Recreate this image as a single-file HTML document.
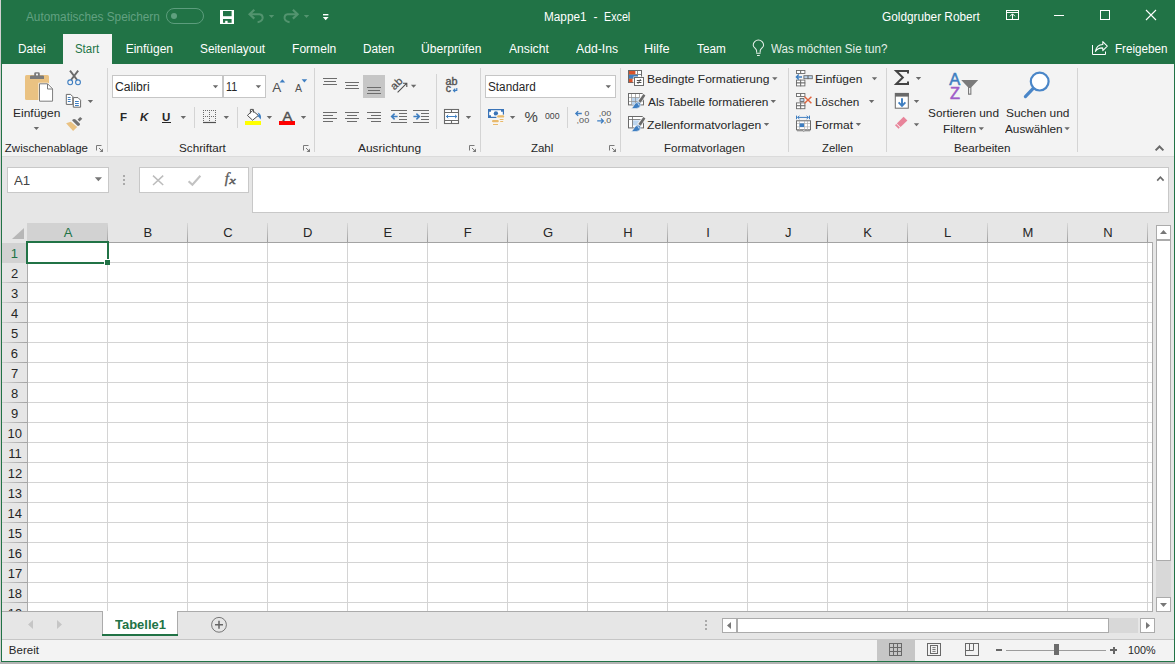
<!DOCTYPE html>
<html lang="de"><head><meta charset="utf-8"><title>Mappe1 - Excel</title>
<style>
html,body{margin:0;padding:0}
body{width:1175px;height:664px;position:relative;overflow:hidden;background:#e6e6e6;font-family:"Liberation Sans",sans-serif;}
body>div,body>span,body>svg{position:absolute;display:block}
.t{white-space:pre;line-height:20px;height:20px;transform-origin:0 0}
svg{overflow:visible}
</style></head><body>
<div style="left:0px;top:0px;width:1px;height:664px;background:#d2d0d1;"></div>
<div style="left:1px;top:0px;width:1174px;height:64px;background:#217346;"></div>
<div style="left:2px;top:64px;width:1172px;height:92px;background:#f3f3f3;"></div>
<div style="left:2px;top:156px;width:1172px;height:1px;background:#dbdbdb;"></div>
<div style="left:1px;top:0px;width:1px;height:662px;background:#217346;"></div>
<div style="left:1174px;top:0px;width:1px;height:662px;background:#217346;"></div>
<div style="left:1px;top:661px;width:1174px;height:1px;background:#217346;"></div>
<div style="left:0px;top:662px;width:1175px;height:2px;background:#b3b3b3;"></div>
<span class="t" style="left:25.50px;top:6.80px;font-size:12px;color:#62a181;transform:scaleX(0.9836);">Automatisches Speichern</span>
<div style="left:166px;top:8px;width:36px;height:14px;border:1px solid #5c9d7d;border-radius:8px"></div>
<div style="left:171px;top:13px;width:6px;height:6px;border-radius:3px;background:#5fa07f"></div>
<span class="t" style="left:543.98px;top:6.80px;font-size:12px;color:#fff;transform:scaleX(0.9815);">Mappe1</span>
<span class="t" style="left:593.50px;top:6.80px;font-size:12px;color:#fff;">-</span>
<span class="t" style="left:604.16px;top:6.80px;font-size:12px;color:#fff;transform:scaleX(0.8941);">Excel</span>
<span class="t" style="left:882.25px;top:6.60px;font-size:12px;color:#fff;transform:scaleX(0.9843);">Goldgruber Robert</span>
<div style="left:63px;top:34px;width:49px;height:30px;background:#f3f3f3;"></div>
<span class="t" style="left:17.78px;top:38.80px;font-size:12px;color:#fff;transform:scaleX(0.9843);">Datei</span>
<span class="t" style="left:74.66px;top:38.80px;font-size:12px;color:#217346;transform:scaleX(0.9519);">Start</span>
<span class="t" style="left:125.66px;top:38.80px;font-size:12px;color:#fff;">Einfügen</span>
<span class="t" style="left:199.95px;top:38.80px;font-size:12px;color:#fff;transform:scaleX(0.9851);">Seitenlayout</span>
<span class="t" style="left:291.96px;top:38.80px;font-size:12px;color:#fff;transform:scaleX(1.0068);">Formeln</span>
<span class="t" style="left:362.88px;top:38.80px;font-size:12px;color:#fff;transform:scaleX(0.9811);">Daten</span>
<span class="t" style="left:421.06px;top:38.80px;font-size:12px;color:#fff;transform:scaleX(1.0073);">Überprüfen</span>
<span class="t" style="left:508.50px;top:38.80px;font-size:12px;color:#fff;transform:scaleX(1.0115);">Ansicht</span>
<span class="t" style="left:575.50px;top:38.80px;font-size:12px;color:#fff;transform:scaleX(1.0162);">Add-Ins</span>
<span class="t" style="left:644.00px;top:38.80px;font-size:12px;color:#fff;transform:scaleX(1.0637);">Hilfe</span>
<span class="t" style="left:696.56px;top:38.80px;font-size:12px;color:#fff;transform:scaleX(0.9797);">Team</span>
<span class="t" style="left:770.54px;top:38.80px;font-size:12px;color:#e4efe8;transform:scaleX(0.9682);">Was möchten Sie tun?</span>
<span class="t" style="left:1114.79px;top:39.00px;font-size:12px;color:#fff;transform:scaleX(0.9699);">Freigeben</span>
<div style="left:107px;top:68px;width:1px;height:84px;background:#d4d4d4;"></div>
<div style="left:314px;top:68px;width:1px;height:84px;background:#d4d4d4;"></div>
<div style="left:480px;top:68px;width:1px;height:84px;background:#d4d4d4;"></div>
<div style="left:620px;top:68px;width:1px;height:84px;background:#d4d4d4;"></div>
<div style="left:788px;top:68px;width:1px;height:84px;background:#d4d4d4;"></div>
<div style="left:886px;top:68px;width:1px;height:84px;background:#d4d4d4;"></div>
<div style="left:1077px;top:68px;width:1px;height:84px;background:#d4d4d4;"></div>
<div style="left:194px;top:107px;width:1px;height:21px;background:#d4d4d4;"></div>
<div style="left:237px;top:107px;width:1px;height:21px;background:#d4d4d4;"></div>
<div style="left:567px;top:107px;width:1px;height:21px;background:#d4d4d4;"></div>
<div style="left:436px;top:74px;width:1px;height:55px;background:#d4d4d4;"></div>
<span class="t" style="left:4.82px;top:137.50px;font-size:11.5px;color:#262626;">Zwischenablage</span>
<span class="t" style="left:179.29px;top:137.50px;font-size:11.5px;color:#262626;transform:scaleX(1.0168);">Schriftart</span>
<span class="t" style="left:358.20px;top:137.50px;font-size:11.5px;color:#262626;transform:scaleX(1.0383);">Ausrichtung</span>
<span class="t" style="left:530.92px;top:137.50px;font-size:11.5px;color:#262626;">Zahl</span>
<span class="t" style="left:664.06px;top:137.50px;font-size:11.5px;color:#262626;transform:scaleX(1.0041);">Formatvorlagen</span>
<span class="t" style="left:822.13px;top:137.50px;font-size:11.5px;color:#262626;transform:scaleX(0.9884);">Zellen</span>
<span class="t" style="left:953.85px;top:137.50px;font-size:11.5px;color:#262626;transform:scaleX(1.0148);">Bearbeiten</span>
<span class="t" style="left:12.92px;top:102.50px;font-size:11.5px;color:#262626;transform:scaleX(1.0423);">Einfügen</span>
<div style="left:112px;top:75px;width:109px;height:21px;background:#fff;border:1px solid #c6c6c6;"></div>
<div style="left:223px;top:75px;width:41px;height:21px;background:#fff;border:1px solid #c6c6c6;"></div>
<span class="t" style="left:115.13px;top:76.90px;font-size:12px;color:#262626;transform:scaleX(1.0176);">Calibri</span>
<span class="t" style="left:226.42px;top:76.90px;font-size:12px;color:#262626;transform:scaleX(0.8949);">11</span>
<span class="t" style="left:120.05px;top:106.50px;font-size:11.5px;color:#262626;font-weight:bold;">F</span>
<span class="t" style="left:140.11px;top:106.50px;font-size:11.5px;color:#262626;font-weight:bold;font-style:italic;">K</span>
<span class="t" style="left:162.11px;top:106.50px;font-size:11.5px;color:#262626;font-weight:bold;">U</span>
<div style="left:162px;top:122px;width:9px;height:1px;background:#262626;"></div>
<div style="left:485px;top:75px;width:129px;height:21px;background:#fff;border:1px solid #c6c6c6;"></div>
<span class="t" style="left:488.05px;top:76.90px;font-size:12px;color:#262626;transform:scaleX(0.9794);">Standard</span>
<span class="t" style="left:524.50px;top:107.10px;font-size:15px;color:#444;">%</span>
<span class="t" style="left:544.76px;top:106.30px;font-size:9.5px;color:#444;transform:scaleX(0.9190);">000</span>
<span class="t" style="left:646.72px;top:68.60px;font-size:11.5px;color:#262626;transform:scaleX(1.0459);">Bedingte Formatierung</span>
<span class="t" style="left:647.70px;top:91.50px;font-size:11.5px;color:#262626;transform:scaleX(1.0313);">Als Tabelle formatieren</span>
<span class="t" style="left:646.90px;top:114.50px;font-size:11.5px;color:#262626;transform:scaleX(1.0567);">Zellenformatvorlagen</span>
<span class="t" style="left:814.82px;top:68.60px;font-size:11.5px;color:#262626;transform:scaleX(1.0423);">Einfügen</span>
<span class="t" style="left:814.84px;top:91.50px;font-size:11.5px;color:#262626;transform:scaleX(1.0188);">Löschen</span>
<span class="t" style="left:814.82px;top:114.50px;font-size:11.5px;color:#262626;transform:scaleX(1.0441);">Format</span>
<span class="t" style="left:928.09px;top:102.50px;font-size:11.5px;color:#262626;transform:scaleX(1.0278);">Sortieren und</span>
<span class="t" style="left:942.93px;top:118.80px;font-size:11.5px;color:#262626;transform:scaleX(1.0326);">Filtern</span>
<span class="t" style="left:1005.88px;top:102.50px;font-size:11.5px;color:#262626;transform:scaleX(1.0334);">Suchen und</span>
<span class="t" style="left:1004.50px;top:118.80px;font-size:11.5px;color:#262626;transform:scaleX(1.0241);">Auswählen</span>
<div style="left:7px;top:167px;width:100px;height:24px;background:#fff;border:1px solid #c8c8c8;"></div>
<span class="t" style="left:14.30px;top:170.50px;font-size:13px;color:#444;transform:scaleX(1.0188);">A1</span>
<div style="left:123px;top:175px;width:2px;height:2px;background:#aaaaaa;"></div>
<div style="left:123px;top:179px;width:2px;height:2px;background:#aaaaaa;"></div>
<div style="left:123px;top:183px;width:2px;height:2px;background:#aaaaaa;"></div>
<div style="left:139px;top:167px;width:108px;height:24px;background:#fff;border:1px solid #c8c8c8;"></div>
<div style="left:252px;top:167px;width:915px;height:44px;background:#fff;border:1px solid #c8c8c8;"></div>
<div style="left:27px;top:243px;width:1126px;height:369px;background:#fff;"></div>
<div style="left:27px;top:223px;width:81px;height:18px;background:#d2d2d2;"></div>
<div style="left:107px;top:223px;width:1px;height:20px;background:linear-gradient(to bottom,#d8d8d8,#9c9c9c);"></div>
<div style="left:107px;top:243px;width:1px;height:369px;background:#d4d4d4;"></div>
<div style="left:187px;top:223px;width:1px;height:20px;background:linear-gradient(to bottom,#d8d8d8,#9c9c9c);"></div>
<div style="left:187px;top:243px;width:1px;height:369px;background:#d4d4d4;"></div>
<div style="left:267px;top:223px;width:1px;height:20px;background:linear-gradient(to bottom,#d8d8d8,#9c9c9c);"></div>
<div style="left:267px;top:243px;width:1px;height:369px;background:#d4d4d4;"></div>
<div style="left:347px;top:223px;width:1px;height:20px;background:linear-gradient(to bottom,#d8d8d8,#9c9c9c);"></div>
<div style="left:347px;top:243px;width:1px;height:369px;background:#d4d4d4;"></div>
<div style="left:427px;top:223px;width:1px;height:20px;background:linear-gradient(to bottom,#d8d8d8,#9c9c9c);"></div>
<div style="left:427px;top:243px;width:1px;height:369px;background:#d4d4d4;"></div>
<div style="left:507px;top:223px;width:1px;height:20px;background:linear-gradient(to bottom,#d8d8d8,#9c9c9c);"></div>
<div style="left:507px;top:243px;width:1px;height:369px;background:#d4d4d4;"></div>
<div style="left:587px;top:223px;width:1px;height:20px;background:linear-gradient(to bottom,#d8d8d8,#9c9c9c);"></div>
<div style="left:587px;top:243px;width:1px;height:369px;background:#d4d4d4;"></div>
<div style="left:667px;top:223px;width:1px;height:20px;background:linear-gradient(to bottom,#d8d8d8,#9c9c9c);"></div>
<div style="left:667px;top:243px;width:1px;height:369px;background:#d4d4d4;"></div>
<div style="left:747px;top:223px;width:1px;height:20px;background:linear-gradient(to bottom,#d8d8d8,#9c9c9c);"></div>
<div style="left:747px;top:243px;width:1px;height:369px;background:#d4d4d4;"></div>
<div style="left:827px;top:223px;width:1px;height:20px;background:linear-gradient(to bottom,#d8d8d8,#9c9c9c);"></div>
<div style="left:827px;top:243px;width:1px;height:369px;background:#d4d4d4;"></div>
<div style="left:907px;top:223px;width:1px;height:20px;background:linear-gradient(to bottom,#d8d8d8,#9c9c9c);"></div>
<div style="left:907px;top:243px;width:1px;height:369px;background:#d4d4d4;"></div>
<div style="left:987px;top:223px;width:1px;height:20px;background:linear-gradient(to bottom,#d8d8d8,#9c9c9c);"></div>
<div style="left:987px;top:243px;width:1px;height:369px;background:#d4d4d4;"></div>
<div style="left:1067px;top:223px;width:1px;height:20px;background:linear-gradient(to bottom,#d8d8d8,#9c9c9c);"></div>
<div style="left:1067px;top:243px;width:1px;height:369px;background:#d4d4d4;"></div>
<div style="left:1147px;top:223px;width:1px;height:20px;background:linear-gradient(to bottom,#d8d8d8,#9c9c9c);"></div>
<div style="left:1147px;top:243px;width:1px;height:369px;background:#d4d4d4;"></div>
<div style="left:27px;top:242px;width:1126px;height:1px;background:#a3a3a3;"></div>
<div style="left:1152px;top:242px;width:1px;height:370px;background:#ababab;"></div>
<span class="t" style="left:63.69px;top:222.80px;font-size:13px;color:#217346;">A</span>
<span class="t" style="left:143.47px;top:222.80px;font-size:13px;color:#262626;">B</span>
<span class="t" style="left:223.25px;top:222.80px;font-size:13px;color:#262626;">C</span>
<span class="t" style="left:303.06px;top:222.80px;font-size:13px;color:#262626;">D</span>
<span class="t" style="left:383.41px;top:222.80px;font-size:13px;color:#262626;">E</span>
<span class="t" style="left:463.75px;top:222.80px;font-size:13px;color:#262626;">F</span>
<span class="t" style="left:543.09px;top:222.80px;font-size:13px;color:#262626;">G</span>
<span class="t" style="left:623.28px;top:222.80px;font-size:13px;color:#262626;">H</span>
<span class="t" style="left:706.19px;top:222.80px;font-size:13px;color:#262626;">I</span>
<span class="t" style="left:785.12px;top:222.80px;font-size:13px;color:#262626;">J</span>
<span class="t" style="left:863.22px;top:222.80px;font-size:13px;color:#262626;">K</span>
<span class="t" style="left:944.06px;top:222.80px;font-size:13px;color:#262626;">L</span>
<span class="t" style="left:1022.59px;top:222.80px;font-size:13px;color:#262626;">M</span>
<span class="t" style="left:1103.28px;top:222.80px;font-size:13px;color:#262626;">N</span>
<div style="left:2px;top:243px;width:25px;height:20px;background:#d2d2d2;"></div>
<div style="left:27px;top:263px;width:1px;height:349px;background:#ababab;"></div>
<div style="left:28px;top:262px;width:1124px;height:1px;background:#d4d4d4;"></div>
<div style="left:2px;top:282px;width:25px;height:1px;background:linear-gradient(to right,#d2d2d2,#a3a3a3);"></div>
<div style="left:28px;top:282px;width:1124px;height:1px;background:#d4d4d4;"></div>
<div style="left:2px;top:302px;width:25px;height:1px;background:linear-gradient(to right,#d2d2d2,#a3a3a3);"></div>
<div style="left:28px;top:302px;width:1124px;height:1px;background:#d4d4d4;"></div>
<div style="left:2px;top:322px;width:25px;height:1px;background:linear-gradient(to right,#d2d2d2,#a3a3a3);"></div>
<div style="left:28px;top:322px;width:1124px;height:1px;background:#d4d4d4;"></div>
<div style="left:2px;top:342px;width:25px;height:1px;background:linear-gradient(to right,#d2d2d2,#a3a3a3);"></div>
<div style="left:28px;top:342px;width:1124px;height:1px;background:#d4d4d4;"></div>
<div style="left:2px;top:362px;width:25px;height:1px;background:linear-gradient(to right,#d2d2d2,#a3a3a3);"></div>
<div style="left:28px;top:362px;width:1124px;height:1px;background:#d4d4d4;"></div>
<div style="left:2px;top:382px;width:25px;height:1px;background:linear-gradient(to right,#d2d2d2,#a3a3a3);"></div>
<div style="left:28px;top:382px;width:1124px;height:1px;background:#d4d4d4;"></div>
<div style="left:2px;top:402px;width:25px;height:1px;background:linear-gradient(to right,#d2d2d2,#a3a3a3);"></div>
<div style="left:28px;top:402px;width:1124px;height:1px;background:#d4d4d4;"></div>
<div style="left:2px;top:422px;width:25px;height:1px;background:linear-gradient(to right,#d2d2d2,#a3a3a3);"></div>
<div style="left:28px;top:422px;width:1124px;height:1px;background:#d4d4d4;"></div>
<div style="left:2px;top:442px;width:25px;height:1px;background:linear-gradient(to right,#d2d2d2,#a3a3a3);"></div>
<div style="left:28px;top:442px;width:1124px;height:1px;background:#d4d4d4;"></div>
<div style="left:2px;top:462px;width:25px;height:1px;background:linear-gradient(to right,#d2d2d2,#a3a3a3);"></div>
<div style="left:28px;top:462px;width:1124px;height:1px;background:#d4d4d4;"></div>
<div style="left:2px;top:482px;width:25px;height:1px;background:linear-gradient(to right,#d2d2d2,#a3a3a3);"></div>
<div style="left:28px;top:482px;width:1124px;height:1px;background:#d4d4d4;"></div>
<div style="left:2px;top:502px;width:25px;height:1px;background:linear-gradient(to right,#d2d2d2,#a3a3a3);"></div>
<div style="left:28px;top:502px;width:1124px;height:1px;background:#d4d4d4;"></div>
<div style="left:2px;top:522px;width:25px;height:1px;background:linear-gradient(to right,#d2d2d2,#a3a3a3);"></div>
<div style="left:28px;top:522px;width:1124px;height:1px;background:#d4d4d4;"></div>
<div style="left:2px;top:542px;width:25px;height:1px;background:linear-gradient(to right,#d2d2d2,#a3a3a3);"></div>
<div style="left:28px;top:542px;width:1124px;height:1px;background:#d4d4d4;"></div>
<div style="left:2px;top:562px;width:25px;height:1px;background:linear-gradient(to right,#d2d2d2,#a3a3a3);"></div>
<div style="left:28px;top:562px;width:1124px;height:1px;background:#d4d4d4;"></div>
<div style="left:2px;top:582px;width:25px;height:1px;background:linear-gradient(to right,#d2d2d2,#a3a3a3);"></div>
<div style="left:28px;top:582px;width:1124px;height:1px;background:#d4d4d4;"></div>
<div style="left:2px;top:602px;width:25px;height:1px;background:linear-gradient(to right,#d2d2d2,#a3a3a3);"></div>
<div style="left:28px;top:602px;width:1124px;height:1px;background:#d4d4d4;"></div>
<span class="t" style="left:10.69px;top:243.50px;font-size:13px;color:#217346;">1</span>
<span class="t" style="left:10.91px;top:263.50px;font-size:13px;color:#262626;">2</span>
<span class="t" style="left:10.91px;top:283.50px;font-size:13px;color:#262626;">3</span>
<span class="t" style="left:10.91px;top:303.50px;font-size:13px;color:#262626;">4</span>
<span class="t" style="left:10.91px;top:323.50px;font-size:13px;color:#262626;">5</span>
<span class="t" style="left:10.84px;top:343.50px;font-size:13px;color:#262626;">6</span>
<span class="t" style="left:10.91px;top:363.50px;font-size:13px;color:#262626;">7</span>
<span class="t" style="left:10.88px;top:383.50px;font-size:13px;color:#262626;">8</span>
<span class="t" style="left:10.88px;top:403.50px;font-size:13px;color:#262626;">9</span>
<span class="t" style="left:7.60px;top:423.50px;font-size:13px;color:#262626;">10</span>
<span class="t" style="left:8.16px;top:443.50px;font-size:13px;color:#262626;">11</span>
<span class="t" style="left:7.69px;top:463.50px;font-size:13px;color:#262626;">12</span>
<span class="t" style="left:7.63px;top:483.50px;font-size:13px;color:#262626;">13</span>
<span class="t" style="left:7.54px;top:503.50px;font-size:13px;color:#262626;">14</span>
<span class="t" style="left:7.63px;top:523.50px;font-size:13px;color:#262626;">15</span>
<span class="t" style="left:7.63px;top:543.50px;font-size:13px;color:#262626;">16</span>
<span class="t" style="left:7.69px;top:563.50px;font-size:13px;color:#262626;">17</span>
<span class="t" style="left:7.63px;top:583.50px;font-size:13px;color:#262626;">18</span>
<span class="t" style="left:7.66px;top:603.50px;font-size:13px;color:#262626;">19</span>
<svg style="left:12px;top:228px;" width="12" height="11" viewBox="0 0 12 11"><path d="M12 0V11H0Z" fill="#b7b7b7"/></svg>
<div style="left:26px;top:241px;width:79px;height:19px;border:2px solid #217346"></div>
<div style="left:104px;top:259px;width:6px;height:6px;background:#fff;"></div>
<div style="left:105px;top:260px;width:5px;height:5px;background:#217346;"></div>
<div style="left:27px;top:241px;width:81px;height:1px;background:#217346;"></div>
<div style="left:26px;top:243px;width:1px;height:20px;background:#217346;"></div>
<div style="left:1156px;top:225px;width:13px;height:13px;background:#fff;border:1px solid #ababab;"></div>
<div style="left:1156px;top:240px;width:13px;height:319px;background:#fff;border:1px solid #ababab;"></div>
<div style="left:1156px;top:561px;width:15px;height:36px;background:#d8d8d8;"></div>
<div style="left:1156px;top:597px;width:13px;height:13px;background:#fff;border:1px solid #ababab;"></div>
<svg style="left:1160px;top:230px;" width="7" height="4" viewBox="0 0 7 4"><path d="M0 4H7L3.5 0Z" fill="#777"/></svg>
<svg style="left:1160px;top:603px;" width="7" height="4" viewBox="0 0 7 4"><path d="M0 0H7L3.5 4Z" fill="#777"/></svg>
<div style="left:2px;top:612px;width:1172px;height:27px;background:#e6e6e6;"></div>
<div style="left:2px;top:611px;width:1151px;height:1px;background:#ababab;"></div>
<div style="left:103px;top:611px;width:74px;height:23px;background:#fff;"></div>
<div style="left:102px;top:612px;width:1px;height:22px;background:#ababab;"></div>
<div style="left:177px;top:612px;width:1px;height:22px;background:#ababab;"></div>
<div style="left:102px;top:634px;width:76px;height:2px;background:#217346;"></div>
<span class="t" style="left:114.57px;top:615.00px;font-size:12.5px;color:#217346;transform:scaleX(1.0386);font-weight:bold;">Tabelle1</span>
<svg style="left:28px;top:620px;" width="5" height="9" viewBox="0 0 5 9"><path d="M5 0V9L0 4.5Z" fill="#c6c6c6"/></svg>
<svg style="left:57px;top:620px;" width="5" height="9" viewBox="0 0 5 9"><path d="M0 0V9L5 4.5Z" fill="#c6c6c6"/></svg>
<svg style="left:210px;top:616px;" width="18" height="18" viewBox="0 0 18 18"><circle cx="9" cy="8.8" r="7.4" fill="none" stroke="#777" stroke-width="1"/><path d="M5 8.8H13M9 4.8V12.8" stroke="#666" stroke-width="1.5"/></svg>
<div style="left:705px;top:620px;width:2px;height:2px;background:#aaaaaa;"></div>
<div style="left:705px;top:624px;width:2px;height:2px;background:#aaaaaa;"></div>
<div style="left:705px;top:628px;width:2px;height:2px;background:#aaaaaa;"></div>
<div style="left:722px;top:618px;width:13px;height:13px;background:#fff;border:1px solid #ababab;"></div>
<div style="left:737px;top:618px;width:370px;height:13px;background:#fff;border:1px solid #ababab;"></div>
<div style="left:1109px;top:618px;width:29px;height:15px;background:#d8d8d8;"></div>
<div style="left:1140px;top:618px;width:13px;height:13px;background:#fff;border:1px solid #ababab;"></div>
<svg style="left:727px;top:622px;" width="4" height="7" viewBox="0 0 4 7"><path d="M4 0V7L0 3.5Z" fill="#777"/></svg>
<svg style="left:1146px;top:622px;" width="4" height="7" viewBox="0 0 4 7"><path d="M0 0V7L4 3.5Z" fill="#777"/></svg>
<div style="left:2px;top:639px;width:1172px;height:1px;background:#c6c6c6;"></div>
<div style="left:2px;top:640px;width:1172px;height:21px;background:#f3f3f3;"></div>
<span class="t" style="left:8.86px;top:639.70px;font-size:11.5px;color:#262626;">Bereit</span>
<div style="left:877px;top:640px;width:38px;height:21px;background:#c6c6c6;"></div>
<span class="t" style="left:1128.08px;top:639.60px;font-size:11.5px;color:#262626;transform:scaleX(0.9351);">100%</span>
<div style="left:996px;top:649px;width:6px;height:2px;background:#666;"></div>
<div style="left:1006px;top:650px;width:100px;height:1px;background:#9c9c9c;"></div>
<div style="left:1054px;top:644px;width:5px;height:11px;background:#6c6c6c;"></div>
<div style="left:1110px;top:649px;width:7px;height:2px;background:#666;"></div>
<div style="left:1112.5px;top:646.5px;width:2px;height:7px;background:#666;"></div>
<svg style="left:0;top:0" width="1175" height="664" viewBox="0 0 1175 664" font-family="Liberation Sans, sans-serif"><rect x="220" y="10" width="14" height="14" fill="#fff"/><rect x="223" y="11" width="8.6" height="5.2" fill="#217346"/><rect x="223" y="19" width="8.6" height="3.8" fill="#217346"/><rect x="225.2" y="20.8" width="2.4" height="2.2" fill="#fff"/><path d="M250.5 14.2H259.5Q263 14.6 262.6 18.4Q262 21.6 257.6 22.2" fill="none" stroke="#53946f" stroke-width="2"/><path d="M254.3 9.8L249.6 14.2L254.3 18.6" fill="none" stroke="#53946f" stroke-width="2.2"/><path d="M268.8 15.1H274.2L271.5 18.1Z" fill="#53946f"/><path d="M296.7 14.2H287.7Q284.2 14.6 284.6 18.4Q285.2 21.6 289.6 22.2" fill="none" stroke="#53946f" stroke-width="2"/><path d="M292.9 9.8L297.6 14.2L292.9 18.6" fill="none" stroke="#53946f" stroke-width="2.2"/><path d="M303.8 15.1H309.2L306.5 18.1Z" fill="#53946f"/><rect x="323" y="14" width="5.4" height="1.4" fill="#fff"/><path d="M322.8 17H328.6L325.7 20.2Z" fill="#fff"/><rect x="1006.5" y="10.5" width="12" height="9" fill="none" stroke="#fff"/><path d="M1007 12.5H1018M1012.5 14V19.5M1010 16.3L1012.5 13.8L1015 16.3" fill="none" stroke="#fff"/><path d="M1054 15.5H1064" stroke="#fff"/><rect x="1100.5" y="10.5" width="9" height="9" fill="none" stroke="#fff"/><path d="M1146 10L1156 20M1156 10L1146 20" stroke="#fff" stroke-width="1.1"/><path d="M756.6 52.4V50.6C756.4 48.6 753.2 47.6 753.2 45.2A5.2 5.2 0 0 1 763.6 45.2C763.6 47.6 760.4 48.6 760.2 50.6V52.4M756.2 53.2H760.6M757 55.5H759.8" fill="none" stroke="#e4efe8" stroke-width="1.05"/><path d="M1092.5 45V54.5H1105.5V51.5" fill="none" stroke="#fff"/><path d="M1095.4 51.4C1096 47.4 1098.8 44.6 1102.8 44.4V41.6L1107.3 46.1L1102.8 50.6V47.9C1099.6 47.8 1097.2 48.8 1095.4 51.4Z" fill="none" stroke="#fff" stroke-width="1.05" stroke-linejoin="round"/><rect x="25" y="75" width="24" height="25" rx="1.5" fill="#eac282"/><path d="M30 79V76.4Q30 75.4 31 75.4H34.2V73.6Q34.2 72.2 35.6 72.2H38.4Q39.8 72.2 39.8 73.6V75.4H43Q44 75.4 44 76.4V79Z" fill="#7a7a7a"/><rect x="36" y="73.6" width="2" height="1.8" fill="#f3f3f3"/><path d="M38.5 82.8H48L53.6 88.4V102.2H38.5Z" fill="#fff"/><path d="M39.5 83.8H47.6L52.6 88.8V101.2H39.5Z" fill="#fff" stroke="#7a7a7a"/><path d="M47.5 84V89H52.5" fill="none" stroke="#7a7a7a"/><path d="M33.699999999999996 126.9H39.1L36.4 129.9Z" fill="#6a6a6a"/><path d="M70 70.6L77.2 80M78.2 70.6L71 80" stroke="#6a6a6a" stroke-width="1.9"/><circle cx="70.2" cy="82.3" r="2.4" fill="none" stroke="#3e7ec1" stroke-width="1.1"/><circle cx="78" cy="82.3" r="2.4" fill="none" stroke="#3e7ec1" stroke-width="1.1"/><path d="M66.3 94.4H70.6L72.8 96.6V104.4H66.3Z" fill="#fff" stroke="#6a6a6a"/><path d="M67.8 97.5H70.6M67.8 99.5H70.6M67.8 101.5H70.6" stroke="#3e7ec1"/><path d="M73.3 97.6H78L80.6 100.2V107.2H73.3Z" fill="#fff" stroke="#6a6a6a"/><path d="M75 101.5H78.8M75 103.5H78.8M75 105.5H78.8" stroke="#3e7ec1"/><path d="M87.7 99.89999999999999H93.10000000000001L90.4 102.89999999999999Z" fill="#6a6a6a"/><path d="M66.1 123.3L70.8 121.7L77.2 126.9L73.1 130.9Z" fill="#eac282"/><path d="M72.2 120.6Q72.2 119.6 73.2 119.2Q74.6 118.6 75.6 119.6L79.8 123.6Q80.4 124.6 79.6 125.2Q78.2 126.4 77.2 125.6Z" fill="#727272"/><path d="M77.6 119.4L80.2 117L82.3 118.8L79.5 121.4Z" fill="#727272"/><path d="M96.5 150.5V145.5H101.5" fill="none" stroke="#7a7a7a"/><path d="M99 148L102 151" stroke="#7a7a7a"/><path d="M103 148.5V152H99.5Z" fill="#7a7a7a"/><path d="M212.8 85.19999999999999H218.2L215.5 88.19999999999999Z" fill="#6a6a6a"/><path d="M255.7 85.19999999999999H261.09999999999997L258.4 88.19999999999999Z" fill="#6a6a6a"/><text x="272.2" y="92" font-size="13.5" fill="#505050">A</text><path d="M279.6 82.4H285.2L282.4 79.2Z" fill="#3e7ec1"/><text x="294.9" y="92" font-size="10.5" fill="#505050">A</text><path d="M301.6 79.2H307.2L304.4 82.4Z" fill="#3e7ec1"/><path d="M180.60000000000002 116.1H186.0L183.3 119.1Z" fill="#6a6a6a"/><path d="M203 110.5H216M203 116.5H216M203.5 110V121M209.5 110V121M215.5 110V121" fill="none" stroke="#6a6a6a" stroke-dasharray="1 1"/><path d="M203 122.5H216" stroke="#505050" stroke-width="1.2"/><path d="M223.60000000000002 116.1H229.0L226.3 119.1Z" fill="#6a6a6a"/><rect x="245" y="121" width="16" height="4" fill="#ffff00"/><path d="M252.6 110.6L258.4 115.4L252.6 120.2L247.4 115.4Z" fill="#fff" stroke="#505050" stroke-width="1"/><path d="M250.4 113.4V109.4H253.4V112.6" fill="none" stroke="#505050"/><path d="M257.6 112.6C260.6 113.6 261.8 116.4 260.6 119.6C259.6 117.8 259 116.8 257.2 116.2L258.8 114.8Z" fill="#3e7ec1"/><path d="M266.7 116.1H272.09999999999997L269.4 119.1Z" fill="#6a6a6a"/><rect x="279" y="121" width="16" height="4" fill="#ff0000"/><text x="282.4" y="120.6" font-size="13.5" fill="#505050" stroke="#505050" stroke-width=".45" textLength="9.8" lengthAdjust="spacingAndGlyphs">A</text><path d="M300.8 116.1H306.2L303.5 119.1Z" fill="#6a6a6a"/><path d="M303.5 150.5V145.5H308.5" fill="none" stroke="#7a7a7a"/><path d="M306 148L309 151" stroke="#7a7a7a"/><path d="M310 148.5V152H306.5Z" fill="#7a7a7a"/><rect x="323" y="78" width="14" height="1" fill="#6c6c6c"/><rect x="324" y="81" width="12" height="1" fill="#6c6c6c"/><rect x="323" y="84" width="14" height="1" fill="#6c6c6c"/><rect x="345" y="82" width="14" height="1" fill="#6c6c6c"/><rect x="346" y="85" width="12" height="1" fill="#6c6c6c"/><rect x="345" y="88" width="14" height="1" fill="#6c6c6c"/><rect x="363" y="75" width="22" height="23" fill="#c6c6c6"/><rect x="367" y="87" width="14" height="1" fill="#6c6c6c"/><rect x="368" y="90" width="12" height="1" fill="#6c6c6c"/><rect x="367" y="93" width="14" height="1" fill="#6c6c6c"/><rect x="323" y="112" width="14" height="1" fill="#6c6c6c"/><rect x="345.0" y="112" width="14" height="1" fill="#6c6c6c"/><rect x="367" y="112" width="14" height="1" fill="#6c6c6c"/><rect x="323" y="115" width="10" height="1" fill="#6c6c6c"/><rect x="347.0" y="115" width="10" height="1" fill="#6c6c6c"/><rect x="371" y="115" width="10" height="1" fill="#6c6c6c"/><rect x="323" y="118" width="14" height="1" fill="#6c6c6c"/><rect x="345.0" y="118" width="14" height="1" fill="#6c6c6c"/><rect x="367" y="118" width="14" height="1" fill="#6c6c6c"/><rect x="323" y="121" width="10" height="1" fill="#6c6c6c"/><rect x="347.0" y="121" width="10" height="1" fill="#6c6c6c"/><rect x="371" y="121" width="10" height="1" fill="#6c6c6c"/><text transform="translate(394.6 90.4) rotate(-45)" font-size="10.5" fill="#505050" stroke="#505050" stroke-width=".25" textLength="12.2" lengthAdjust="spacingAndGlyphs">ab</text><path d="M397.6 92.4L406.6 83.4M403 83.2H406.8V87" fill="none" stroke="#505050" stroke-width="1.1"/><path d="M410.90000000000003 84.8H416.3L413.6 87.8Z" fill="#6a6a6a"/><rect x="391" y="110" width="16" height="1" fill="#6c6c6c"/><rect x="413" y="110" width="16" height="1" fill="#6c6c6c"/><rect x="391" y="122" width="16" height="1" fill="#6c6c6c"/><rect x="413" y="122" width="16" height="1" fill="#6c6c6c"/><rect x="399" y="113" width="8" height="1" fill="#6c6c6c"/><rect x="421" y="113" width="8" height="1" fill="#6c6c6c"/><rect x="399" y="116" width="8" height="1" fill="#6c6c6c"/><rect x="421" y="116" width="8" height="1" fill="#6c6c6c"/><rect x="399" y="119" width="8" height="1" fill="#6c6c6c"/><rect x="421" y="119" width="8" height="1" fill="#6c6c6c"/><path d="M391.6 116.5H397.6M394.6 113.6L391.6 116.5L394.6 119.4" fill="none" stroke="#3e7ec1" stroke-width="1.5"/><path d="M413.4 116.5H419.4M416.4 113.6L419.4 116.5L416.4 119.4" fill="none" stroke="#3e7ec1" stroke-width="1.5"/><text x="445.5" y="84.9" font-size="10" fill="#505050" stroke="#505050" stroke-width=".35" textLength="12" lengthAdjust="spacingAndGlyphs">ab</text><text x="445.8" y="92.4" font-size="10" fill="#505050" stroke="#505050" stroke-width=".35" textLength="5.2" lengthAdjust="spacingAndGlyphs">c</text><path d="M456.8 88V90.4H453.4M455.2 88.6L453.4 90.4L455.2 92.2" fill="none" stroke="#3e7ec1" stroke-width="1.1"/><rect x="444.5" y="109.5" width="14" height="14" fill="#fff" stroke="#6a6a6a" stroke-width="1.1"/><path d="M445 112.5H458M445 120.5H458M451.5 110V112M451.5 121V123" stroke="#6a6a6a" stroke-width="1.1"/><path d="M446.4 116.5H456.8M448.2 114.8L446.4 116.5L448.2 118.2M455 114.8L456.8 116.5L455 118.2" fill="none" stroke="#3e7ec1"/><path d="M465.8 115.89999999999999H471.2L468.5 118.89999999999999Z" fill="#6a6a6a"/><path d="M469.5 150.5V145.5H474.5" fill="none" stroke="#7a7a7a"/><path d="M472 148L475 151" stroke="#7a7a7a"/><path d="M476 148.5V152H472.5Z" fill="#7a7a7a"/><path d="M605.5999999999999 85.19999999999999H611.0L608.3 88.19999999999999Z" fill="#6a6a6a"/><rect x="488" y="109" width="16" height="9" fill="#3a74b8"/><path d="M491 110.2H501V111.8H502.8V115.2H501V116.8H491V115.2H489.2V111.8H491Z" fill="#fff"/><circle cx="495.9" cy="113.4" r="2.2" fill="#3a74b8"/><rect x="496.4" y="114.6" width="8.4" height="8" rx="1.5" fill="#f7f5f2"/><rect x="491.4" y="119.6" width="8.2" height="6" rx="1.5" fill="#f7f5f2"/><g fill="#e8b96b"><rect x="497.2" y="115.2" width="7" height="2.4" rx="1.2"/><rect x="499.7" y="119" width="3.8" height="1"/><rect x="500.2" y="121" width="3" height="1"/><rect x="492" y="120.1" width="6.8" height="2.2" rx="1.1"/><rect x="493" y="124" width="5" height="1"/></g><path d="M509.90000000000003 116.0H515.3000000000001L512.6 119.0Z" fill="#6a6a6a"/><g font-size="8" fill="#505050"><text x="584.4" y="115.6" textLength="4.8" lengthAdjust="spacingAndGlyphs">0</text><text x="576.6" y="122.7" textLength="12.6" lengthAdjust="spacingAndGlyphs">,00</text><text x="598.8" y="115.6" textLength="12.4" lengthAdjust="spacingAndGlyphs">,00</text><text x="603.8" y="122.7" textLength="7.4" lengthAdjust="spacingAndGlyphs">,0</text></g><path d="M575.6 113.5H581.8M578.2 111.1L575.8 113.5L578.2 115.9" fill="none" stroke="#3e7ec1" stroke-width="1.3"/><path d="M597.2 120.9H603.6M601 118.5L603.4 120.9L601 123.3" fill="none" stroke="#3e7ec1" stroke-width="1.3"/><path d="M609.5 150.5V145.5H614.5" fill="none" stroke="#7a7a7a"/><path d="M612 148L615 151" stroke="#7a7a7a"/><path d="M616 148.5V152H612.5Z" fill="#7a7a7a"/><rect x="628.5" y="70.5" width="13" height="12" fill="#fff" stroke="#6a6a6a"/><path d="M629 74.5H641M629 78.5H641M637.5 71V74" stroke="#6a6a6a" stroke-width=".8"/><rect x="629" y="71" width="6.4" height="3.2" fill="#d9532c"/><rect x="629" y="75" width="9" height="3.2" fill="#3e7ec1"/><rect x="629" y="79" width="3.6" height="3.2" fill="#d9532c"/><rect x="633.5" y="76.5" width="11" height="10" fill="#f3f3f3"/><rect x="634.5" y="77.5" width="9" height="8" fill="#fff" stroke="#6a6a6a"/><path d="M636.8 80.5H641.4M636.8 82.5H641.4" stroke="#505050" stroke-width="1"/><path d="M640.6 79L637.8 84" stroke="#505050" stroke-width=".8"/><rect x="628.5" y="93.5" width="15" height="11.4" fill="#fff" stroke="#6a6a6a"/><rect x="632" y="97.6" width="8" height="7.2" fill="#bcd5ee"/><path d="M629 97.5H643M629 101.5H643M631.5 94V104.5M635.5 94V104.5M639.5 94V104.5" stroke="#8c8c8c" stroke-width=".7"/><path d="M643.4 92.6L646.6 95L641.2 103.6L637.2 101Z" fill="#f3f3f3"/><path d="M643.4 93.9L645.4 95.4L640.7 102.7L638.4 101.1Z" fill="#6a6a6a"/><path d="M631.4 108.4C634 106.4 634 103.4 637.4 102.2C640.2 102 641.4 104.2 640.2 106.2C638.6 108.8 634.6 108.8 631.4 108.4Z" fill="#3e7ec1" stroke="#f3f3f3" stroke-width=".6"/><path d="M637.6 103.6Q639.4 103.8 639.2 105.6" fill="none" stroke="#fff" stroke-width=".9"/><rect x="628.5" y="116.5" width="15" height="11.4" fill="#fff" stroke="#6a6a6a"/><rect x="632.6" y="120.4" width="8" height="5" fill="#bcd5ee"/><path d="M629 119.5H643M632.5 117V127.5" stroke="#6a6a6a" stroke-width=".8"/><path d="M643.4 115.6L646.6 118L641.2 126.6L637.2 124Z" fill="#f3f3f3"/><path d="M643.4 116.9L645.4 118.4L640.7 125.7L638.4 124.1Z" fill="#6a6a6a"/><path d="M631.4 131.4C634 129.4 634 126.4 637.4 125.2C640.2 125 641.4 127.2 640.2 129.2C638.6 131.8 634.6 131.8 631.4 131.4Z" fill="#3e7ec1" stroke="#f3f3f3" stroke-width=".6"/><path d="M637.6 126.6Q639.4 126.8 639.2 128.6" fill="none" stroke="#fff" stroke-width=".9"/><path d="M772.0999999999999 77.19999999999999H777.5L774.8 80.19999999999999Z" fill="#6a6a6a"/><path d="M770.5999999999999 100.0H776.0L773.3 103.0Z" fill="#6a6a6a"/><path d="M763.8 123.1H769.2L766.5 126.1Z" fill="#6a6a6a"/><rect x="796.5" y="70.5" width="4.2" height="3" fill="#fff" stroke="#6a6a6a" stroke-width=".9"/><rect x="800.7" y="70.5" width="4.2" height="3" fill="#fff" stroke="#6a6a6a" stroke-width=".9"/><rect x="803.9" y="75.7" width="4.2" height="3" fill="#bcd5ee" stroke="#6a6a6a" stroke-width=".9"/><rect x="808.1" y="75.7" width="4.2" height="3" fill="#bcd5ee" stroke="#6a6a6a" stroke-width=".9"/><rect x="796.5" y="80.1" width="4.2" height="2.9" fill="#fff" stroke="#6a6a6a" stroke-width=".9"/><rect x="800.7" y="80.1" width="4.2" height="2.9" fill="#fff" stroke="#6a6a6a" stroke-width=".9"/><rect x="796.5" y="83.0" width="4.2" height="2.9" fill="#fff" stroke="#6a6a6a" stroke-width=".9"/><rect x="800.7" y="83.0" width="4.2" height="2.9" fill="#fff" stroke="#6a6a6a" stroke-width=".9"/><path d="M796.4 77H802M798.8 74.6L796.4 77L798.8 79.4" fill="none" stroke="#3e7ec1" stroke-width="1.4"/><rect x="796.5" y="93.5" width="4.2" height="3" fill="#fff" stroke="#6a6a6a" stroke-width=".9"/><rect x="800.7" y="93.5" width="4.2" height="3" fill="#fff" stroke="#6a6a6a" stroke-width=".9"/><rect x="800.1" y="98.5" width="3.8" height="3" fill="#bcd5ee" stroke="#6a6a6a" stroke-width=".9"/><rect x="796.5" y="102.9" width="4.2" height="2.9" fill="#fff" stroke="#6a6a6a" stroke-width=".9"/><rect x="800.7" y="102.9" width="4.2" height="2.9" fill="#fff" stroke="#6a6a6a" stroke-width=".9"/><rect x="796.5" y="105.80000000000001" width="4.2" height="2.9" fill="#fff" stroke="#6a6a6a" stroke-width=".9"/><rect x="800.7" y="105.80000000000001" width="4.2" height="2.9" fill="#fff" stroke="#6a6a6a" stroke-width=".9"/><path d="M804.6 96.8L811.4 103.2M811.4 96.8L804.6 103.2" stroke="#e0643e" stroke-width="1.5"/><path d="M796.5 115.6V119.2M809.5 115.6V119.2M797.6 117.4H808.4M799.4 115.8L797.6 117.4L799.4 119M806.6 115.8L808.4 117.4L806.6 119" fill="none" stroke="#3e7ec1"/><rect x="796.5" y="120.8" width="14" height="9" fill="#fff" stroke="#6a6a6a"/><path d="M797 123.5H810M797 126.8H810M799.5 121V130M804.5 121V130M807.5 121V130" stroke="#b0b0b0" stroke-width=".7"/><rect x="799.6" y="123.4" width="4.4" height="3.6" fill="#3e7ec1"/><path d="M797 130.8H803L803.8 131.6L804.6 130.8H810" fill="none" stroke="#6a6a6a" stroke-width=".8"/><path d="M871.8 77.19999999999999H877.2L874.5 80.19999999999999Z" fill="#6a6a6a"/><path d="M868.9 100.0H874.3000000000001L871.6 103.0Z" fill="#6a6a6a"/><path d="M855.6999999999999 123.1H861.1L858.4 126.1Z" fill="#6a6a6a"/><path d="M908 73.4V71H896.2L902.8 77.5L896.2 84H908V81.6" fill="none" stroke="#444" stroke-width="2" stroke-linejoin="miter"/><path d="M915.8 77.0H921.2L918.5 80.0Z" fill="#6a6a6a"/><rect x="895.3" y="93.4" width="13" height="14.8" fill="#fff" stroke="#6a6a6a"/><rect x="895" y="93" width="13.8" height="3.6" fill="#6a6a6a"/><path d="M902 98.2V105.6M898.6 102.4L902 105.8L905.4 102.4" fill="none" stroke="#3e7ec1" stroke-width="1.9"/><path d="M913.8 100.0H919.2L916.5 103.0Z" fill="#6a6a6a"/><path d="M903.6 116.8L907.4 120.4L900.6 127L896.8 123.4Z" fill="#e8849a"/><path d="M896.2 124L899.8 127.6L898.6 128.8L895 125.2Z" fill="#e8849a"/><path d="M913.8 123.19999999999999H919.2L916.5 126.19999999999999Z" fill="#6a6a6a"/><text x="949.2" y="84.9" font-size="16" fill="#3e7ec1" stroke="#3e7ec1" stroke-width=".5" textLength="11" lengthAdjust="spacingAndGlyphs">A</text><text x="950" y="98.6" font-size="16" fill="#a05cc8" stroke="#a05cc8" stroke-width=".5" textLength="10" lengthAdjust="spacingAndGlyphs">Z</text><path d="M961.2 80H978.2L971.4 87.2V94.8H968V87.2Z" fill="#7a7a7a"/><rect x="969.1" y="88" width="1.2" height="5.6" fill="#f3f3f3"/><path d="M978.5999999999999 127.19999999999999H984.0L981.3 130.2Z" fill="#6a6a6a"/><path d="M1064.3999999999999 127.19999999999999H1069.8L1067.1 130.2Z" fill="#6a6a6a"/><circle cx="1039.7" cy="81.6" r="8.9" fill="#fff" stroke="#4a86c8" stroke-width="2.2"/><path d="M1033 88.6L1025.4 96.6" stroke="#4a86c8" stroke-width="3.2" stroke-linecap="round"/><path d="M1155.6 150.4L1159.5 146.5L1163.4 150.4" fill="none" stroke="#6a6a6a" stroke-width="2"/><path d="M94.8 177.2H102L98.4 181.2Z" fill="#777"/><path d="M153 175.6L163.2 185M163.2 175.6L153 185" stroke="#bcbcbc" stroke-width="1.5"/><path d="M188.6 181.2L192.4 184.8L200.4 175.8" fill="none" stroke="#c2c2c2" stroke-width="2.1"/><text x="224.8" y="183.4" font-size="15" font-style="italic" fill="#5a5a5a" stroke="#5a5a5a" stroke-width=".35" font-family="Liberation Serif,serif">f</text><text x="229.2" y="184.4" font-size="10.5" font-style="italic" fill="#5a5a5a" stroke="#5a5a5a" stroke-width=".4" font-family="Liberation Serif,serif" textLength="6.6" lengthAdjust="spacingAndGlyphs">x</text><path d="M1157.2 180.6L1160.4 177.2L1163.6 180.6" fill="none" stroke="#6a6a6a" stroke-width="1.6"/><rect x="889.5" y="643.5" width="12" height="12" fill="none" stroke="#686868"/><path d="M890 647.5H901M890 651.5H901M893.5 644V655M897.5 644V655" stroke="#686868"/><rect x="927.5" y="643.5" width="13" height="12" fill="none" stroke="#686868"/><rect x="930.5" y="645.5" width="7" height="8" fill="none" stroke="#686868"/><path d="M932.4 647.6H935.6M932.4 649.5H935.6M932.4 651.4H935.6" stroke="#686868" stroke-width=".9"/><rect x="965.5" y="643.5" width="13" height="12" fill="none" stroke="#686868"/><path d="M966 650.5H973.5V644M969.5 644V650" fill="none" stroke="#686868"/></svg>
</body></html>
